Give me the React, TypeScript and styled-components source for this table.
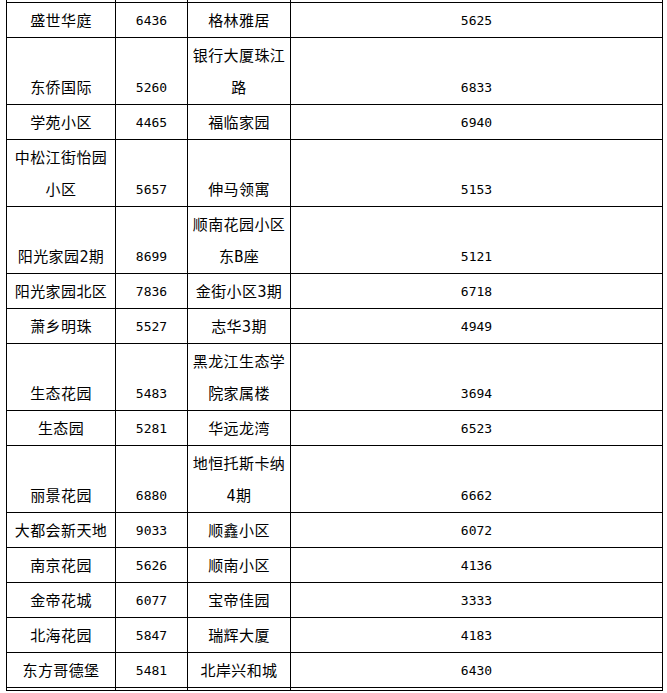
import styled, { createGlobalStyle } from "styled-components";

const GlobalStyle = createGlobalStyle`
  html, body {
    margin: 0;
    padding: 0;
    background: #fff;
    overflow: hidden;
  }
`;

const Page = styled.div`
  padding-left: 6px;
`;

const Table = styled.table`
  border-collapse: collapse;
  table-layout: fixed;
  width: 656px;
  font-family: "Noto Sans CJK SC", sans-serif;
  color: #000;
`;

const Cell = styled.td<{ $num?: boolean }>`
  border: 1px solid #000;
  padding: 2px 2px 0;
  line-height: 32px;
  vertical-align: bottom;
  text-align: center;
  font-family: ${(p) =>
    p.$num ? `"DejaVu Sans Mono", monospace` : `"DejaVu Sans Mono", "Noto Sans CJK SC", sans-serif`};
  font-size: ${(p) => (p.$num ? "13px" : "15px")};
  letter-spacing: ${(p) => (p.$num ? "0" : "0.4px")};
`;

const StubCell = styled.td`
  border-left: 1px solid #000;
  border-right: 1px solid #000;
  border-bottom: 1px solid #000;
  height: 2px;
  padding: 0;
`;

const rows = [
  ["盛世华庭", "6436", "格林雅居", "5625"],
  ["东侨国际", "5260", "银行大厦珠江路", "6833"],
  ["学苑小区", "4465", "福临家园", "6940"],
  ["中松江街怡园小区", "5657", "伸马领寓", "5153"],
  ["阳光家园2期", "8699", "顺南花园小区东B座", "5121"],
  ["阳光家园北区", "7836", "金街小区3期", "6718"],
  ["萧乡明珠", "5527", "志华3期", "4949"],
  ["生态花园", "5483", "黑龙江生态学院家属楼", "3694"],
  ["生态园", "5281", "华远龙湾", "6523"],
  ["丽景花园", "6880", "地恒托斯卡纳4期", "6662"],
  ["大都会新天地", "9033", "顺鑫小区", "6072"],
  ["南京花园", "5626", "顺南小区", "4136"],
  ["金帝花城", "6077", "宝帝佳园", "3333"],
  ["北海花园", "5847", "瑞辉大厦", "4183"],
  ["东方哥德堡", "5481", "北岸兴和城", "6430"],
  ["", "", "", ""],
];

export default function App() {
  return (
    <Page>
      <GlobalStyle />
      <Table>
        <colgroup>
          <col style={{ width: 109 }} />
          <col style={{ width: 72 }} />
          <col style={{ width: 103 }} />
          <col style={{ width: 372 }} />
        </colgroup>
        <tbody>
          <tr>
            <StubCell />
            <StubCell />
            <StubCell />
            <StubCell />
          </tr>
          {rows.map((r, i) => (
            <tr key={i}>
              <Cell>{r[0]}</Cell>
              <Cell $num>{r[1]}</Cell>
              <Cell>{r[2]}</Cell>
              <Cell $num>{r[3]}</Cell>
            </tr>
          ))}
        </tbody>
      </Table>
    </Page>
  );
}
